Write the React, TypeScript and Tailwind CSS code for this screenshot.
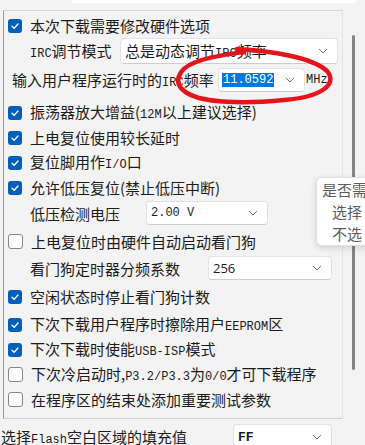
import type { ReactNode } from "react";

const mono = "font-['Liberation_Mono',monospace] text-[12px]";

function Check({ on }: { on?: boolean }) {
  if (on) {
    return (
      <span className="w-[14px] h-[14px] rounded-[3px] bg-[#005fb8] flex items-center justify-center shrink-0">
        <svg width="10" height="10" viewBox="0 0 10 10">
          <path d="M2 5.2 L4.2 7.3 L8 3" fill="none" stroke="white" strokeWidth="1.3" strokeLinecap="round" strokeLinejoin="round" />
        </svg>
      </span>
    );
  }
  return <span className="w-[15px] h-[15px] rounded-[3px] border border-[#858585] bg-[#fbfbfb] shrink-0" />;
}

function Chevron() {
  return (
    <svg width="10" height="6" viewBox="0 0 10 6" className="shrink-0">
      <polyline points="1,1 5,5 9,1" fill="none" stroke="#6f6f6f" strokeWidth="1" />
    </svg>
  );
}

function Select({ className, children }: { className: string; children: ReactNode }) {
  return (
    <div className={`flex items-center justify-between bg-white border border-[#e2e2e2] border-b-[#cdcdcd] rounded-[4px] pl-[4px] pr-[9px] shrink-0 ${className}`}>
      {children}
      <Chevron />
    </div>
  );
}

function CheckRow({ on, className = "", children }: { on?: boolean; className?: string; children: ReactNode }) {
  return (
    <div className={`flex items-center h-[25px] pl-[4px] gap-[8px] ${className}`}>
      <Check on={on} />
      <span>{children}</span>
    </div>
  );
}

export default function App() {
  return (
    <div className="relative w-[365px] h-[445px] overflow-hidden bg-[#f3f3f3] text-[15px] leading-none text-[#1b1b1b] font-['Noto_Sans_CJK_SC',sans-serif]">
      <div className="h-[10px]">
        <div className="ml-[72px] w-[283px] h-[3px] bg-white" />
      </div>

      <div className="flex">
        <div className="ml-[3px] w-[340px] border-l border-l-[#9a9a9a] border-t border-t-[#d6d6d6] border-r border-r-[#e4e4e4] border-b border-b-[#d2d2d2] pb-[6px]">
          <CheckRow on className="mt-[2px]">本次下载需要修改硬件选项</CheckRow>

          <div className="flex items-center h-[26px] pl-[26px]">
            <span className="w-[90px] shrink-0">
              <span className={mono}>IRC</span>调节模式
            </span>
            <Select className="w-[218px] h-[26px]">
              <span>
                总是动态调节<span className={mono}>IRC</span>频率
              </span>
            </Select>
          </div>

          <div className="flex items-center h-[24px] mt-[4px] pl-[8px]">
            <span className="w-[206px] shrink-0">
              输入用户程序运行时的<span className={mono}>IRC</span>频率
            </span>
            <Select className="w-[87px] h-[24px] !pl-[3px]">
              <span className={`${mono} text-[12.5px] bg-[#0078d7] text-white px-[1px] py-[1px]`}>11.0592</span>
            </Select>
            <span className={`${mono} ml-[1px]`}>MHz</span>
          </div>

          <CheckRow on className="mt-[8px]">
            振荡器放大增益(<span className={mono}>12M</span>以上建议选择)
          </CheckRow>
          <CheckRow on>上电复位使用较长延时</CheckRow>
          <CheckRow on>
            复位脚用作<span className={mono}>I/O</span>口
          </CheckRow>
          <CheckRow on>允许低压复位(禁止低压中断)</CheckRow>

          <div className="flex items-center h-[24px] mt-[1px] pl-[26px]">
            <span className="w-[116px] shrink-0">低压检测电压</span>
            <Select className="w-[122px] h-[24px]">
              <span className={mono}>2.00 V</span>
            </Select>
          </div>

          <CheckRow className="mt-[4px]">上电复位时由硬件自动启动看门狗</CheckRow>

          <div className="flex items-center h-[24px] mt-[2px] pl-[26px]">
            <span className="w-[178px] shrink-0">看门狗定时器分频系数</span>
            <Select className="w-[124px] h-[24px]">
              <span className="font-['Open_Sans',sans-serif] text-[13px]">256</span>
            </Select>
          </div>

          <CheckRow on className="mt-[4px]">空闲状态时停止看门狗计数</CheckRow>
          <CheckRow on className="mt-[3px]">
            下次下载用户程序时擦除用户<span className={mono}>EEPROM</span>区
          </CheckRow>
          <CheckRow on>
            下次下载时使能<span className={mono}>USB-ISP</span>模式
          </CheckRow>
          <CheckRow>
            下次冷启动时,<span className={mono}>P3.2/P3.3</span>为<span className={mono}>0/0</span>才可下载程序
          </CheckRow>
          <CheckRow>在程序区的结束处添加重要测试参数</CheckRow>
        </div>

        <div className="ml-[9px] mt-[25px] w-[3px] h-[335px] rounded-full bg-[#858585]" />
      </div>

      <div className="flex items-center h-[24px] mt-[6px] pl-[1px]">
        <span className="w-[232px] shrink-0">
          选择<span className={mono}>Flash</span>空白区域的填充值
        </span>
        <Select className="w-[99px] h-[26px]">
          <span className={`${mono} font-bold text-[13px]`}>FF</span>
        </Select>
      </div>

      <div className="absolute left-[316px] top-[177px] w-[70px] h-[69px] bg-white border border-[#e3e3e3] rounded-[6px] shadow-[0_2px_6px_rgba(0,0,0,0.15)] text-[#5c5c5c] flex flex-col justify-center gap-[7px]">
        <span className="pl-[5px]">是否需要</span>
        <span className="pl-[15px]">选择</span>
        <span className="pl-[15px]">不选</span>
      </div>

      <svg className="absolute left-0 top-0 pointer-events-none" width="365" height="445" viewBox="0 0 365 445">
        <path
          d="M237 49 C270 51 312 57 327 71 C338 84 322 97 284 100 C244 104 203 103 187 93 C172 84 177 69 196 62 C212 56 229 54 244 52"
          fill="none"
          stroke="#e3141b"
          strokeWidth="4.5"
          strokeLinecap="round"
        />
      </svg>
    </div>
  );
}
